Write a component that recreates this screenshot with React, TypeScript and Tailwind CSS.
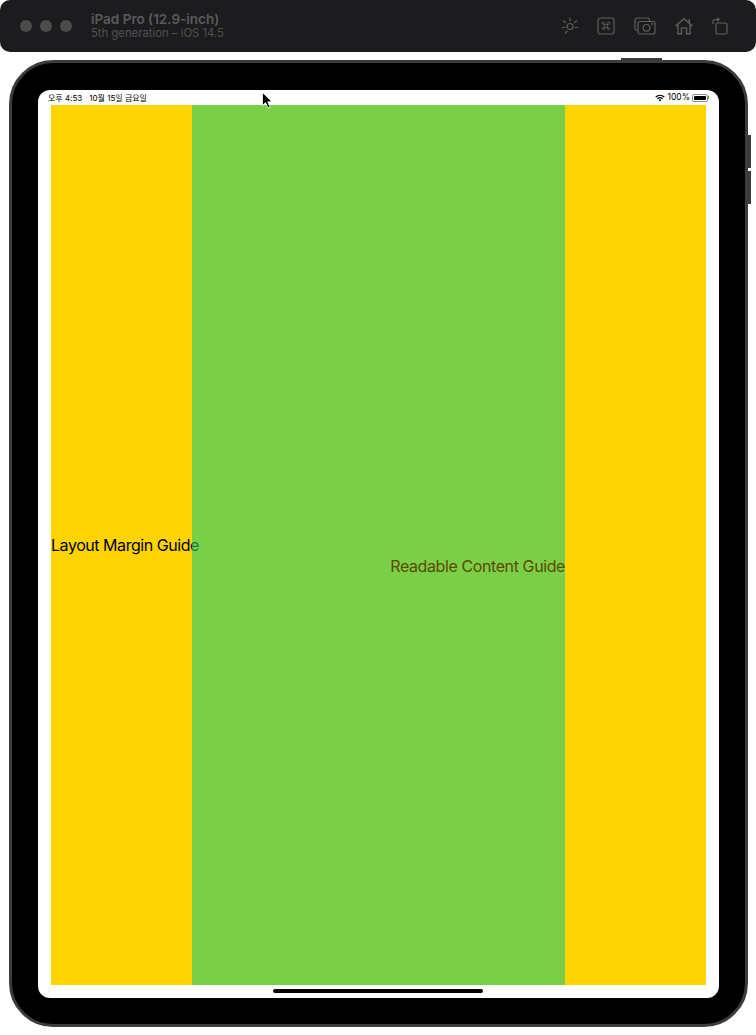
import React from "react";

const ToolIcons = () => (
  <div className="flex items-center text-[#5e5e60]">
    {/* brightness */}
    <svg width="18" height="18" viewBox="0 0 18 18" fill="none" stroke="currentColor" strokeWidth="1.2" strokeLinecap="round" className="mr-[18px]">
      <circle cx="9" cy="9.5" r="3" />
      <path d="M9 1v2.8M2.4 3.8l2.2 1.7M15.6 3.8l-2.2 1.7M1.2 10.5h2.6M14.2 10.5h2.6M4.4 16l1.7-2" />
    </svg>
    {/* command */}
    <svg width="18" height="18" viewBox="0 0 18 18" fill="none" stroke="currentColor" strokeWidth="1.2" className="mr-[19px]">
      <rect x="1" y="1" width="16" height="16" rx="2.5" />
      <path d="M7.4 6.4v5.2M10.6 6.4v5.2M6.2 7.4h5.6M6.2 10.6h5.6M7.4 6.4a1.1 1.1 0 1 0-1.2 1M10.6 6.4a1.1 1.1 0 1 1 1.2 1M7.4 11.6a1.1 1.1 0 1 1-1.2-1M10.6 11.6a1.1 1.1 0 1 0 1.2-1" strokeWidth="0.9" />
    </svg>
    {/* screenshot */}
    <svg width="22" height="18" viewBox="0 0 22 18" fill="none" stroke="currentColor" strokeWidth="1.2" className="mr-[18px]">
      <path d="M3.5 13.5H3a2 2 0 0 1-2-2V3a2 2 0 0 1 2-2h10.5a2 2 0 0 1 2 2v1" />
      <rect x="4" y="4.5" width="17" height="12.5" rx="2" />
      <circle cx="12.5" cy="10.8" r="3.3" />
      <circle cx="18" cy="7" r="0.4" />
    </svg>
    {/* home */}
    <svg width="20" height="18" viewBox="0 0 20 18" className="mr-[18px]" fill="currentColor">
      <path d="M10 0.8 1 8.6l.9 1L3.2 8.5V17.4H8.2V11.6H11.8V17.4H16.8V8.5l1.3 1.1.9-1L16 6V2H14.6V4.8ZM4.6 7.3 10 2.7l5.4 4.6V16H13.2V10.2H6.8V16H4.6Z" />
    </svg>
    {/* rotate */}
    <svg width="16" height="18" viewBox="0 0 16 18" fill="none" stroke="currentColor" strokeWidth="1.2">
      <rect x="4" y="6" width="11" height="11" rx="1.5" />
      <path d="M1 7V5a2.5 2.5 0 0 1 2.5-2.5H7M5 .6 7.2 2.5 5 4.4" />
    </svg>
  </div>
);

const StatusIcons = () => (
  <div className="flex items-center gap-[2px]">
    <svg width="10" height="8" viewBox="0 0 10 8" fill="#000">
      <path d="M5 7.6 3.6 6a2 2 0 0 1 2.8 0ZM2.8 5.2l-.8-.9a4.5 4.5 0 0 1 6 0l-.8.9a3.3 3.3 0 0 0-4.4 0ZM1.2 3.5l-.9-1a7 7 0 0 1 9.4 0l-.9 1a5.7 5.7 0 0 0-7.6 0Z" />
    </svg>
    <span className="text-[8.5px] leading-none text-black">100%</span>
    <div className="flex items-center">
      <div className="w-[16px] h-[8px] rounded-[2px] border border-[#8a8a8a] p-[1px]">
        <div className="w-full h-full bg-black rounded-[1px]" />
      </div>
      <div className="w-[1px] h-[3px] bg-[#8a8a8a]" />
    </div>
  </div>
);

export default function App() {
  return (
    <div className="relative w-[756px] h-[1035px] bg-white overflow-hidden font-['Inter','Noto_Sans_CJK_KR',sans-serif]">
      <div className="h-[52px] bg-[#1c1c1e] rounded-[10px] flex items-center justify-between pl-[20px] pr-[28px]">
        <div className="flex items-center">
          <div className="flex gap-[8px]">
            <div className="w-[12px] h-[12px] rounded-full bg-[#4c4c4e]" />
            <div className="w-[12px] h-[12px] rounded-full bg-[#4c4c4e]" />
            <div className="w-[12px] h-[12px] rounded-full bg-[#4c4c4e]" />
          </div>
          <div className="ml-[19px] -mt-[1px]">
            <div className="text-[13.5px] leading-[16px] font-semibold text-[#5a5a5c]">iPad Pro (12.9-inch)</div>
            <div className="text-[11.3px] leading-[13px] text-[#505052]">5th generation – iOS 14.5</div>
          </div>
        </div>
        <ToolIcons />
      </div>

      <div className="relative mt-[8px] ml-[9px] w-[739px] h-[967px] bg-black border-[3px] border-[#3c3c3e] rounded-[44px] pt-[27px] pl-[26px]">
        {/* hardware buttons */}
        <div className="absolute -top-[5px] left-[609px] w-[41px] h-[2px] bg-[#3c3c3e]" />
        <div className="absolute top-[72px] -right-[6px] w-[3px] h-[33px] bg-[#3c3c3e]" />
        <div className="absolute top-[108px] -right-[6px] w-[3px] h-[33px] bg-[#3c3c3e]" />

        <div className="relative w-[681px] h-[908px] bg-white rounded-[12px] overflow-hidden">
          <div className="h-[15px] flex items-center justify-between pl-[10px] pr-[10px] text-[8px] leading-none text-black">
            <div className="flex gap-[7px]">
              <span>오후 4:53</span>
              <span>10월 15일 금요일</span>
            </div>
            <StatusIcons />
          </div>

          <div className="mx-[13px] h-[880px] bg-[#ffd400] flex">
            <div className="w-[141px] shrink-0 flex items-center">
              <span className="text-[16px] leading-[20px] tracking-[-0.45px] text-black whitespace-nowrap">Layout Margin Guide</span>
            </div>
            <div className="relative w-[373px] shrink-0 bg-[#21cb77]/60 flex items-center justify-end pt-[42px]">
              <span className="text-[16px] leading-[20px] tracking-[-0.4px] text-[#5c4a00] whitespace-nowrap">Readable Content Guide</span>
            </div>
            <div className="flex-1" />
          </div>

          <div className="absolute left-[235px] top-[899px] w-[210px] h-[4px] rounded-full bg-black" />
        </div>
      </div>

      {/* mouse pointer */}
      <svg className="absolute left-[262px] top-[92px]" width="11" height="17" viewBox="0 0 11 17">
        <path d="M0.5 0.5V13.5L3.6 10.6 5.8 15.8 8 14.8 5.8 9.8H10Z" fill="#000" stroke="#fff" strokeWidth="0.8" />
      </svg>
    </div>
  );
}
